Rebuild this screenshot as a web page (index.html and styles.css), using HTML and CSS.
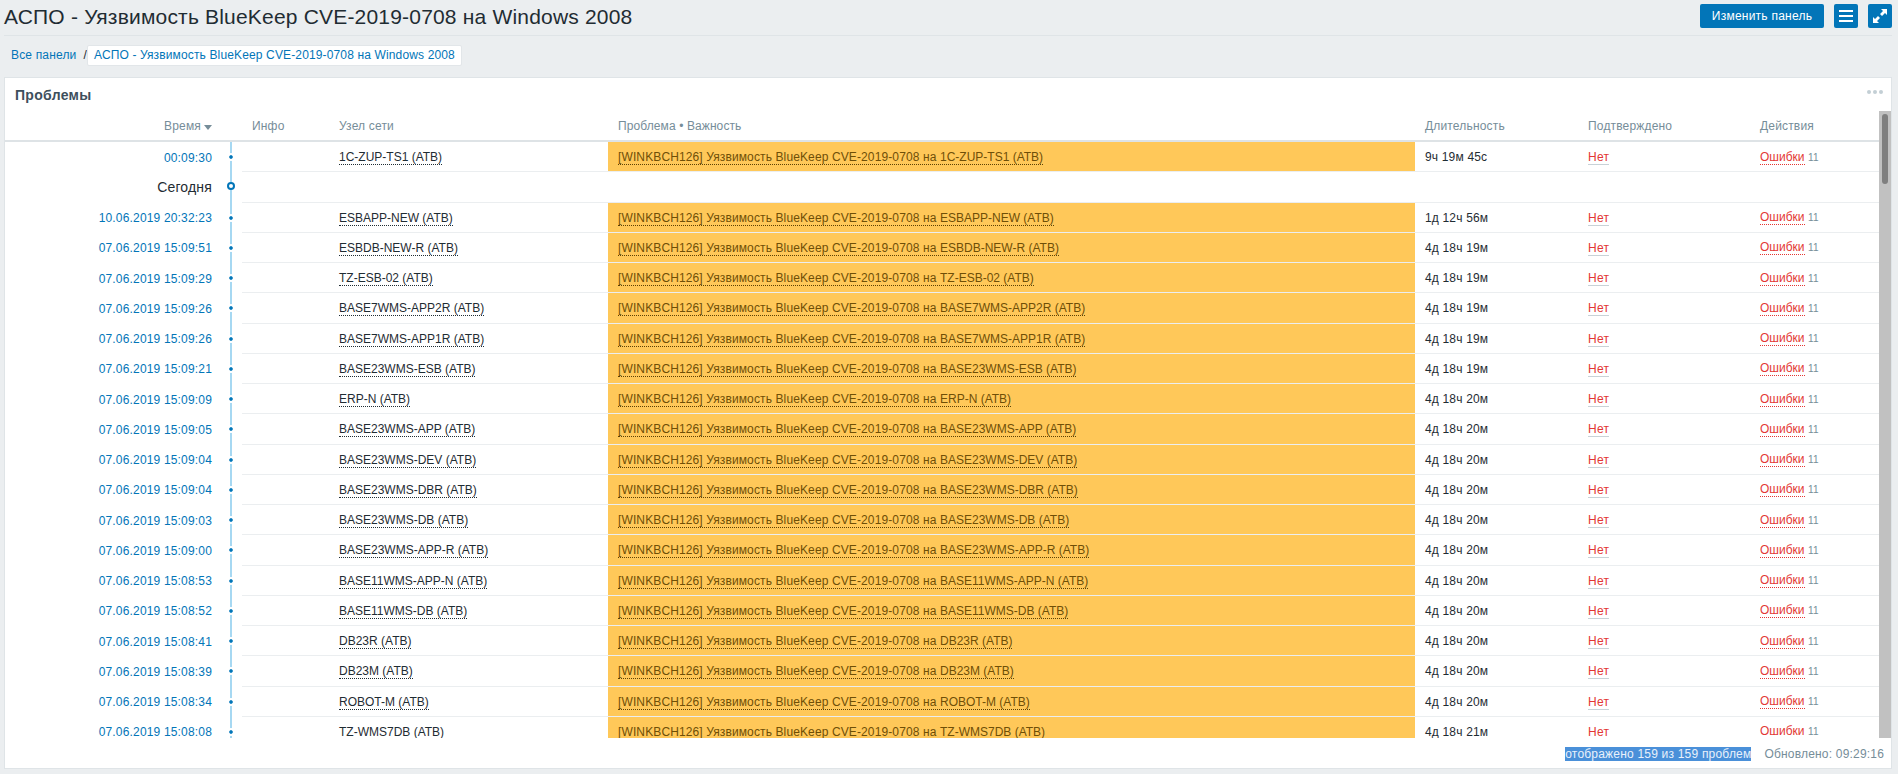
FILE: index.html
```html
<!DOCTYPE html>
<html lang="ru">
<head>
<meta charset="utf-8">
<title>АСПО - Уязвимость BlueKeep CVE-2019-0708 на Windows 2008</title>
<link rel="stylesheet" href="styles.css">
</head>
<body>
<header class="page-head">
  <h1 class="page-title">АСПО - Уязвимость BlueKeep CVE-2019-0708 на Windows 2008</h1>
  <div class="page-actions">
    <button class="btn btn-text">Изменить панель</button>
    <button class="btn btn-icon" aria-label="Меню"><svg width="24" height="24" viewBox="0 0 24 24"><path d="M5 6h14v2H5zM5 11h14v2H5zM5 16h14v2H5z" fill="#fff"/></svg></button>
    <button class="btn btn-icon" aria-label="Во весь экран"><svg width="24" height="24" viewBox="0 0 24 24"><path d="M13 5h6v6l-2-2-3 3-2-2 3-3zM11 19H5v-6l2 2 3-3 2 2-3 3z" fill="#fff"/></svg></button>
  </div>
</header>
<nav class="crumbs">
  <a class="crumb">Все панели</a><span class="crumb-sep">/</span><a class="crumb crumb-current">АСПО - Уязвимость BlueKeep CVE-2019-0708 на Windows 2008</a>
</nav>
<section class="panel">
  <div class="panel-head">
    <h2 class="panel-title">Проблемы</h2>
    <span class="panel-menu"><i></i><i></i><i></i></span>
  </div>
  <div class="panel-body">
    <div class="table-clip">
      <table class="problems">
        <colgroup><col class="c-time"><col class="c-axis"><col class="c-info"><col class="c-host"><col class="c-prob"><col class="c-dur"><col class="c-ack"><col class="c-act"></colgroup>
        <thead>
          <tr><th class="time">Время<span class="sort"></span></th><th></th><th>Инфо</th><th>Узел сети</th><th class="prob-head">Проблема • Важность</th><th>Длительность</th><th>Подтверждено</th><th>Действия</th></tr>
        </thead>
        <tbody>
          <tr><td class="time"><a>00:09:30</a></td><td class="axis"><i class="dot"></i></td><td></td><td><span class="host">1C-ZUP-TS1 (ATB)</span></td><td class="prob"><span><b>[WINKBCH126] Уязвимость BlueKeep CVE-2019-0708 на </b>1C-ZUP-TS1 (ATB)</span></td><td>9ч 19м 45с</td><td><span class="ack">Нет</span></td><td><span class="err">Ошибки</span> <span class="cnt">11</span></td></tr>
          <tr class="today"><td class="time">Сегодня</td><td class="axis"><i class="ring"></i></td><td colspan="6"></td></tr>
          <tr><td class="time"><a>10.06.2019 20:32:23</a></td><td class="axis"><i class="dot"></i></td><td></td><td><span class="host">ESBAPP-NEW (ATB)</span></td><td class="prob"><span><b>[WINKBCH126] Уязвимость BlueKeep CVE-2019-0708 на </b>ESBAPP-NEW (ATB)</span></td><td>1д 12ч 56м</td><td><span class="ack">Нет</span></td><td><span class="err">Ошибки</span> <span class="cnt">11</span></td></tr>
          <tr><td class="time"><a>07.06.2019 15:09:51</a></td><td class="axis"><i class="dot"></i></td><td></td><td><span class="host">ESBDB-NEW-R (ATB)</span></td><td class="prob"><span><b>[WINKBCH126] Уязвимость BlueKeep CVE-2019-0708 на </b>ESBDB-NEW-R (ATB)</span></td><td>4д 18ч 19м</td><td><span class="ack">Нет</span></td><td><span class="err">Ошибки</span> <span class="cnt">11</span></td></tr>
          <tr><td class="time"><a>07.06.2019 15:09:29</a></td><td class="axis"><i class="dot"></i></td><td></td><td><span class="host">TZ-ESB-02 (ATB)</span></td><td class="prob"><span><b>[WINKBCH126] Уязвимость BlueKeep CVE-2019-0708 на </b>TZ-ESB-02 (ATB)</span></td><td>4д 18ч 19м</td><td><span class="ack">Нет</span></td><td><span class="err">Ошибки</span> <span class="cnt">11</span></td></tr>
          <tr><td class="time"><a>07.06.2019 15:09:26</a></td><td class="axis"><i class="dot"></i></td><td></td><td><span class="host">BASE7WMS-APP2R (ATB)</span></td><td class="prob"><span><b>[WINKBCH126] Уязвимость BlueKeep CVE-2019-0708 на </b>BASE7WMS-APP2R (ATB)</span></td><td>4д 18ч 19м</td><td><span class="ack">Нет</span></td><td><span class="err">Ошибки</span> <span class="cnt">11</span></td></tr>
          <tr><td class="time"><a>07.06.2019 15:09:26</a></td><td class="axis"><i class="dot"></i></td><td></td><td><span class="host">BASE7WMS-APP1R (ATB)</span></td><td class="prob"><span><b>[WINKBCH126] Уязвимость BlueKeep CVE-2019-0708 на </b>BASE7WMS-APP1R (ATB)</span></td><td>4д 18ч 19м</td><td><span class="ack">Нет</span></td><td><span class="err">Ошибки</span> <span class="cnt">11</span></td></tr>
          <tr><td class="time"><a>07.06.2019 15:09:21</a></td><td class="axis"><i class="dot"></i></td><td></td><td><span class="host">BASE23WMS-ESB (ATB)</span></td><td class="prob"><span><b>[WINKBCH126] Уязвимость BlueKeep CVE-2019-0708 на </b>BASE23WMS-ESB (ATB)</span></td><td>4д 18ч 19м</td><td><span class="ack">Нет</span></td><td><span class="err">Ошибки</span> <span class="cnt">11</span></td></tr>
          <tr><td class="time"><a>07.06.2019 15:09:09</a></td><td class="axis"><i class="dot"></i></td><td></td><td><span class="host">ERP-N (ATB)</span></td><td class="prob"><span><b>[WINKBCH126] Уязвимость BlueKeep CVE-2019-0708 на </b>ERP-N (ATB)</span></td><td>4д 18ч 20м</td><td><span class="ack">Нет</span></td><td><span class="err">Ошибки</span> <span class="cnt">11</span></td></tr>
          <tr><td class="time"><a>07.06.2019 15:09:05</a></td><td class="axis"><i class="dot"></i></td><td></td><td><span class="host">BASE23WMS-APP (ATB)</span></td><td class="prob"><span><b>[WINKBCH126] Уязвимость BlueKeep CVE-2019-0708 на </b>BASE23WMS-APP (ATB)</span></td><td>4д 18ч 20м</td><td><span class="ack">Нет</span></td><td><span class="err">Ошибки</span> <span class="cnt">11</span></td></tr>
          <tr><td class="time"><a>07.06.2019 15:09:04</a></td><td class="axis"><i class="dot"></i></td><td></td><td><span class="host">BASE23WMS-DEV (ATB)</span></td><td class="prob"><span><b>[WINKBCH126] Уязвимость BlueKeep CVE-2019-0708 на </b>BASE23WMS-DEV (ATB)</span></td><td>4д 18ч 20м</td><td><span class="ack">Нет</span></td><td><span class="err">Ошибки</span> <span class="cnt">11</span></td></tr>
          <tr><td class="time"><a>07.06.2019 15:09:04</a></td><td class="axis"><i class="dot"></i></td><td></td><td><span class="host">BASE23WMS-DBR (ATB)</span></td><td class="prob"><span><b>[WINKBCH126] Уязвимость BlueKeep CVE-2019-0708 на </b>BASE23WMS-DBR (ATB)</span></td><td>4д 18ч 20м</td><td><span class="ack">Нет</span></td><td><span class="err">Ошибки</span> <span class="cnt">11</span></td></tr>
          <tr><td class="time"><a>07.06.2019 15:09:03</a></td><td class="axis"><i class="dot"></i></td><td></td><td><span class="host">BASE23WMS-DB (ATB)</span></td><td class="prob"><span><b>[WINKBCH126] Уязвимость BlueKeep CVE-2019-0708 на </b>BASE23WMS-DB (ATB)</span></td><td>4д 18ч 20м</td><td><span class="ack">Нет</span></td><td><span class="err">Ошибки</span> <span class="cnt">11</span></td></tr>
          <tr><td class="time"><a>07.06.2019 15:09:00</a></td><td class="axis"><i class="dot"></i></td><td></td><td><span class="host">BASE23WMS-APP-R (ATB)</span></td><td class="prob"><span><b>[WINKBCH126] Уязвимость BlueKeep CVE-2019-0708 на </b>BASE23WMS-APP-R (ATB)</span></td><td>4д 18ч 20м</td><td><span class="ack">Нет</span></td><td><span class="err">Ошибки</span> <span class="cnt">11</span></td></tr>
          <tr><td class="time"><a>07.06.2019 15:08:53</a></td><td class="axis"><i class="dot"></i></td><td></td><td><span class="host">BASE11WMS-APP-N (ATB)</span></td><td class="prob"><span><b>[WINKBCH126] Уязвимость BlueKeep CVE-2019-0708 на </b>BASE11WMS-APP-N (ATB)</span></td><td>4д 18ч 20м</td><td><span class="ack">Нет</span></td><td><span class="err">Ошибки</span> <span class="cnt">11</span></td></tr>
          <tr><td class="time"><a>07.06.2019 15:08:52</a></td><td class="axis"><i class="dot"></i></td><td></td><td><span class="host">BASE11WMS-DB (ATB)</span></td><td class="prob"><span><b>[WINKBCH126] Уязвимость BlueKeep CVE-2019-0708 на </b>BASE11WMS-DB (ATB)</span></td><td>4д 18ч 20м</td><td><span class="ack">Нет</span></td><td><span class="err">Ошибки</span> <span class="cnt">11</span></td></tr>
          <tr><td class="time"><a>07.06.2019 15:08:41</a></td><td class="axis"><i class="dot"></i></td><td></td><td><span class="host">DB23R (ATB)</span></td><td class="prob"><span><b>[WINKBCH126] Уязвимость BlueKeep CVE-2019-0708 на </b>DB23R (ATB)</span></td><td>4д 18ч 20м</td><td><span class="ack">Нет</span></td><td><span class="err">Ошибки</span> <span class="cnt">11</span></td></tr>
          <tr><td class="time"><a>07.06.2019 15:08:39</a></td><td class="axis"><i class="dot"></i></td><td></td><td><span class="host">DB23M (ATB)</span></td><td class="prob"><span><b>[WINKBCH126] Уязвимость BlueKeep CVE-2019-0708 на </b>DB23M (ATB)</span></td><td>4д 18ч 20м</td><td><span class="ack">Нет</span></td><td><span class="err">Ошибки</span> <span class="cnt">11</span></td></tr>
          <tr><td class="time"><a>07.06.2019 15:08:34</a></td><td class="axis"><i class="dot"></i></td><td></td><td><span class="host">ROBOT-M (ATB)</span></td><td class="prob"><span><b>[WINKBCH126] Уязвимость BlueKeep CVE-2019-0708 на </b>ROBOT-M (ATB)</span></td><td>4д 18ч 20м</td><td><span class="ack">Нет</span></td><td><span class="err">Ошибки</span> <span class="cnt">11</span></td></tr>
          <tr><td class="time"><a>07.06.2019 15:08:08</a></td><td class="axis"><i class="dot"></i></td><td></td><td><span class="host">TZ-WMS7DB (ATB)</span></td><td class="prob"><span><b>[WINKBCH126] Уязвимость BlueKeep CVE-2019-0708 на </b>TZ-WMS7DB (ATB)</span></td><td>4д 18ч 21м</td><td><span class="ack">Нет</span></td><td><span class="err">Ошибки</span> <span class="cnt">11</span></td></tr>
        </tbody>
      </table>
    </div>
    <div class="scrollbar"><div class="thumb"></div></div>
  </div>
  <footer class="panel-foot">
    <span class="selected">отображено 159 из 159 проблем</span>
    <span class="updated">Обновлено: 09:29:16</span>
  </footer>
</section>
</body>
</html>
```
FILE: styles.css
```css
* { box-sizing: border-box; }
html, body { height: 100%; overflow: hidden; }
body {
  margin: 0;
  padding: 0 6px 0 4px;
  background: #ebeef0;
  color: #1f2c33;
  font: 12px/14px "Liberation Sans", Arial, sans-serif;
  letter-spacing: .17px;
}
.page-head {
  height: 36px;
  display: flex;
  align-items: flex-start;
  justify-content: space-between;
  border-bottom: 1px solid #dfe4e7;
}
.page-title {
  margin: 4px 0 0;
  font-size: 21px;
  line-height: 26px;
  font-weight: 400;
  letter-spacing: .19px;
}
.page-actions { display: flex; gap: 10px; padding-top: 4px; }
.btn {
  height: 24px;
  padding: 0;
  border: 0;
  border-radius: 2px;
  background: #0275b8;
  color: #fff;
  font: inherit;
  letter-spacing: .24px;
}
.btn-text { width: 124px; }
.btn-icon { width: 24px; display: flex; }
.crumbs {
  height: 41px;
  display: flex;
  align-items: flex-start;
  padding-top: 9px;
  color: #0275b8;
}
.crumb { line-height: 20px; padding-left: 7px; }
.crumb-sep { line-height: 20px; color: #1f2c33; padding-left: 7px; }
.crumb-current {
  padding: 0 6px;
  height: 21px;
  background: #fff;
  border: 1px solid #e2e6e9;
  border-radius: 2px;
  line-height: 19px;
  letter-spacing: .14px;
}
.panel {
  height: 692px;
  background: #fff;
  border: 1px solid #dfe4e7;
  display: flex;
  flex-direction: column;
}
.panel-head {
  position: relative;
  height: 33px;
  flex: none;
  padding: 9px 0 0 10px;
}
.panel-title {
  margin: 0;
  font-size: 14px;
  line-height: 16px;
  font-weight: 700;
  color: #3d4f5c;
  letter-spacing: .3px;
}
.panel-menu {
  position: absolute;
  right: 8px;
  top: 12px;
  display: flex;
  gap: 2px;
}
.panel-menu i {
  width: 4px;
  height: 4px;
  border-radius: 50%;
  background: #c3cfd5;
}
.panel-body { height: 627px; flex: none; display: flex; }
.table-clip { width: 1874px; overflow: hidden; }
.problems {
  width: 1874px;
  table-layout: fixed;
  border-collapse: separate;
  border-spacing: 0;
}
.c-time { width: 217px; }
.c-axis { width: 20px; }
.c-info { width: 87px; }
.c-host { width: 279px; }
.c-prob { width: 807px; }
.c-dur { width: 163px; }
.c-ack { width: 172px; }
.c-act { width: 129px; }
.problems th {
  height: 31px;
  padding: 0 10px 7px;
  text-align: left;
  vertical-align: bottom;
  font-weight: 400;
  color: #768d99;
  border-bottom: 2px solid #dee3e6;
}
.problems th.time { text-align: right; }
.problems th.prob-head { letter-spacing: .1px; }
.sort {
  display: inline-block;
  margin-left: 3px;
  border-left: 4px solid transparent;
  border-right: 4px solid transparent;
  border-top: 5px solid #768d99;
  vertical-align: 0;
}
.problems tbody tr { height: 30.25px; }
.problems td {
  padding: 1px 10px 0;
  white-space: nowrap;
  border-bottom: 1px solid #ebeef0;
}
.problems td.time,
.problems td.axis { border-bottom: 0; }
.problems td.time { text-align: right; }
.problems .today td.time { font-size: 14px; padding-top: 0; padding-bottom: 1px; }
.time a { color: #0275b8; }
.problems td.axis { position: relative; padding: 0; }
.axis::before {
  content: "";
  position: absolute;
  left: 8px;
  top: 0;
  bottom: 0;
  width: 2px;
  background: #a6d8f2;
}
.dot, .ring {
  position: absolute;
  border-radius: 50%;
  background-clip: padding-box;
}
.dot {
  left: 5px;
  top: 11px;
  width: 8px;
  height: 8px;
  background-color: #0275b8;
  border: 2px solid #fff;
}
.ring {
  left: 5px;
  top: 10px;
  width: 8px;
  height: 8px;
  background: #fff;
  border: 2px solid #0275b8;
}
.host { border-bottom: 1px dotted #1f2c33; letter-spacing: 0; }
.prob { background: #ffc859; color: #6f4f07; letter-spacing: 0; }
.prob span { border-bottom: 1px dotted #5d4103; }
.prob b { font-weight: 400; letter-spacing: .12px; }
.ack { color: #e33734; border-bottom: 1px solid #c8d2d7; letter-spacing: .3px; }
.err { color: #e33734; border-bottom: 1px dotted #e33734; letter-spacing: 0; }
.cnt { color: #768d99; font-size: 10px; }
.scrollbar {
  flex: 1;
  background: #c1c1c1;
  padding: 3px 3px 0;
}
.thumb {
  width: 6px;
  height: 70px;
  border-radius: 3px;
  background: #7f7f7f;
}
.panel-foot {
  flex: 1;
  display: flex;
  justify-content: flex-end;
  align-items: flex-start;
  padding: 9px 7px 0 0;
  color: #768d99;
}
.selected { background: #4a90d9; color: #e9f1fb; letter-spacing: .2px; }
.updated { margin-left: 13px; letter-spacing: .19px; }
```
